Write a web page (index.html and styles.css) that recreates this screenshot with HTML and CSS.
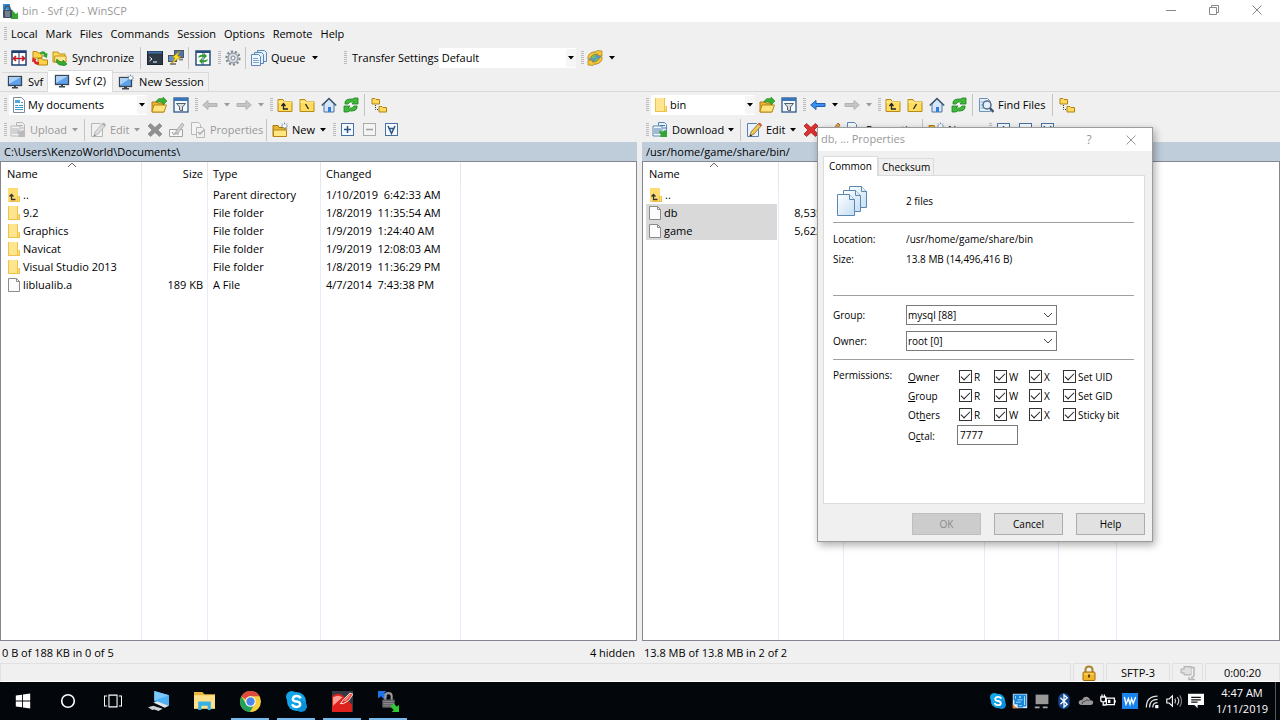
FILE: index.html
```html
<!DOCTYPE html>
<html lang="en">
<head>
<meta charset="utf-8">
<title>bin - Svf (2) - WinSCP</title>
<link rel="stylesheet" href="styles.css">
</head>
<body>
<svg class="defs" aria-hidden="true">
  <symbol id="app" viewBox="0 0 16 16"><path d="M1 1h7v3H7l4 4-2 2-5-4-3 2z" fill="#2b8de0"/><path d="M16 16H9v-3l1-1-3-3 3-2 4 4 2-2z" fill="#35a535"/><path d="M3 8V6q0-3 2.500-3T8 6v2" fill="none" stroke="#4b5560" stroke-width="1.500"/><rect x="1" y="7" width="9" height="8" rx="1" fill="#3f4c5a"/><path d="M3 9h5M3 11h5M3 13h5" stroke="#aab4bf"/></symbol>
  <symbol id="compare" viewBox="0 0 16 16"><rect x="1" y="1" width="14" height="14" fill="#fff" stroke="#1e3f70" stroke-width="1.500"/><path d="M1 2h14" stroke="#1e3f70" stroke-width="2"/><path d="M8 2v13" stroke="#1e3f70"/><path d="M2 8.500h12M5 6 2.500 8.500 5 11M11 6l2.500 2.500L11 11" fill="none" stroke="#c4161c" stroke-width="1.600"/></symbol>
  <symbol id="syncdirs" viewBox="0 0 16 16"><path d="M1 1.500h4l1 1.500h4v5H1zM6 8.500h4l1 1.500h4.500v5H6z" fill="#ffd34d" stroke="#b8860b"/><path d="M8 2.500q4-3 6 1l1.500-.5-.5 5-4.500-2 1.500-1q-1-2-4-.500z" fill="#31a531"/><path d="M7 14.500q-4 1-5.500-3L0 12l.5-4.500 4 2L3.500 10.500q1 2 3.500 1.500z" fill="#d22"/></symbol>
  <symbol id="sync" viewBox="0 0 16 16"><path d="M1 2h5l1 2h6v8H1z" fill="#ffd95c" stroke="#c1900f"/><path d="M3 6h11v6H2z" fill="#ffe88c" stroke="#c1900f"/><path d="M5 9q3 4 6 3v-2l4 4-4 3v-2q-5 1-7-4z" fill="#35ab32" stroke="#16761a" stroke-width=".6"/></symbol>
  <symbol id="term" viewBox="0 0 16 16"><rect x=".5" y="1.500" width="15" height="13" fill="#2d3a46" stroke="#1b2731"/><path d="M1 2.500h14" stroke="#3f6ea6" stroke-width="2"/><path d="m2.500 7 2.500 2-2.500 2M6 12h4" fill="none" stroke="#fff"/></symbol>
  <symbol id="putty" viewBox="0 0 16 16"><rect x="6.500" y=".5" width="9" height="7" fill="#4876b5" stroke="#555"/><rect x=".5" y="5.500" width="8" height="6" fill="#5d8fd0" stroke="#555"/><path d="M2 14h6M11 9.500h4" stroke="#888" stroke-width="2"/><path d="m12 1-8 6.500 3 .5-4 6 10-7.500-3.500-.5z" fill="#ffdf2e" stroke="#a98200" stroke-width=".7"/></symbol>
  <symbol id="refreshwin" viewBox="0 0 16 16"><rect x="1" y="1" width="14" height="14" fill="#fff" stroke="#27507d" stroke-width="1.500"/><path d="M1 2h14" stroke="#27507d" stroke-width="2"/><path d="M8 3v12" stroke="#27507d"/><path d="M3 8q1-4 6-3V3l3 3-3 3V7Q6 6 3 8zm10 1q-1 4-6 3v2l-3-3 3-3v2q3 1 6-1z" fill="#2ba12b"/></symbol>
  <symbol id="gear" viewBox="0 0 16 16"><circle cx="8" cy="8" r="6.600" fill="none" stroke="#7e8893" stroke-width="2" stroke-dasharray="2.300 1.800"/><circle cx="8" cy="8" r="5" fill="#d8dde2" stroke="#7e8893"/><circle cx="8" cy="8" r="2" fill="#f5f5f5" stroke="#7e8893"/></symbol>
  <symbol id="queue" viewBox="0 0 16 16"><path d="M6.500.5h7l2 2v9h-9z" fill="#e3effb" stroke="#5d87b3"/><path d="M3.500 2.500h7l2 2v9h-9z" fill="#e3effb" stroke="#5d87b3"/><path d="M.5 4.500h7l2 2v9h-9z" fill="#eef6ff" stroke="#5d87b3"/><path d="M2 8.500h5M2 10.500h6M2 12.500h6" stroke="#7ea6cf"/></symbol>
  <symbol id="globe" viewBox="0 0 16 16"><circle cx="8" cy="8" r="6.500" fill="#4b9ade"/><path d="m5 4 4 1-1 3-3 1zm4 4 3 1-2 4-2-2z" fill="#78bd55"/><path d="M.8 9Q.5 2 9 1.800L10 .5l5 .5v5l-5-.5 1-1.500Q4.500 3.500 3.200 9zM15.200 7q.3 7-8.200 7.200l-1 1.300-5-.5v-5l5 .5-1 1.500q6.500.5 7.800-5z" fill="#f5c63c" stroke="#a97c14" stroke-width=".7"/></symbol>
  <symbol id="monitor" viewBox="0 0 16 16"><rect x="1.500" y="2.500" width="13" height="9" fill="#5da2ea" stroke="#3d4650" stroke-width="1.300"/><path d="M2 3h12L2 10z" fill="#a8d0f8"/><path d="M7 12h2v1h2v1.500H5V13h2z" fill="#3d4650"/></symbol>
  <symbol id="monitornew" viewBox="0 0 16 16"><rect x="1.500" y="3.500" width="12" height="9" fill="#5da2ea" stroke="#3d4650" stroke-width="1.300"/><path d="M2 4h11L2 11z" fill="#a8d0f8"/><path d="M6 13h3v1h2v1.500H4V14h2z" fill="#3d4650"/><path d="M12.500.5v7M9 4h7M10 1.500l5 5M15 1.500l-5 5" stroke="#557da8" stroke-width=".8"/><circle cx="12.500" cy="4" r="1.800" fill="#fff"/></symbol>
  <symbol id="docs" viewBox="0 0 16 16"><path d="M2.500.5h8l3 3v12h-11z" fill="#fff" stroke="#7d8b99"/><path d="M4 3h5v3H4z" fill="#4aa6dd"/><path d="M4 8.500h3M8 8.500h4M4 10.500h8M4 12.500h8M10 5.500h2" stroke="#389ace"/></symbol>
  <symbol id="folder" viewBox="0 0 16 16"><path d="M2 1h10v8h2v6H2z" fill="#ffdc73"/><path d="M2 1h9v13H2z" fill="#ffe58f"/><path d="M11.500 9v6M2.500 1v14M3 14.500h10M13.500 9v6M11.500 1v8" stroke="#efc34a" fill="none"/></symbol>
  <symbol id="open" viewBox="0 0 16 16"><path d="M1 5h5l1 1h6v9H1z" fill="#e8b530" stroke="#b07d10"/><path d="M3 8h12.500l-2.500 7H1z" fill="#ffe37e" stroke="#b98814"/><path d="M5 5q2-5 7-3V0l4 4-4 4V6Q9 4 5 5z" fill="#39b030" stroke="#197d1b" stroke-width=".6"/></symbol>
  <symbol id="filter" viewBox="0 0 16 16"><rect x="1" y="1" width="14" height="14" fill="#f5faff" stroke="#2d5689" stroke-width="1.300"/><path d="M1 2.500h14" stroke="#3a74b9" stroke-width="3"/><path d="M3.500 6.500h9L9.500 10v4l-3-1v-3z" fill="#d5dde5" stroke="#505d6b"/></symbol>
  <symbol id="back" viewBox="0 0 16 16"><path d="M.7 8 6 3.500v3h9v3H6v3z" fill="#3b8ff0" stroke="#1d5fb4"/></symbol>
  <symbol id="fwd" viewBox="0 0 16 16"><path d="M15.300 8 10 3.500v3H1v3h9v3z" fill="#999" stroke="#777"/></symbol>
  <symbol id="backoff" viewBox="0 0 16 16"><path d="M.7 8 6 3.500v3h9v3H6v3z" fill="#999" stroke="#777"/></symbol>
  <symbol id="up" viewBox="0 0 16 16"><path d="M1 2.500h5l1 2h8v10H1z" fill="#ffdb5e" stroke="#b78b18"/><path d="M1 5h14" stroke="#fff0a8"/><path d="M6.500 6.500V12H11M4.500 9l2-2.500 2 2.500" fill="none" stroke="#222" stroke-width="1.300"/></symbol>
  <symbol id="rootwin" viewBox="0 0 16 16"><path d="M1 2.500h5l1 2h8v10H1z" fill="#ffdb5e" stroke="#b78b18"/><path d="M1 5h14" stroke="#fff0a8"/><path d="m6.500 7 3 5" stroke="#222" stroke-width="1.300"/></symbol>
  <symbol id="rootnix" viewBox="0 0 16 16"><path d="M1 2.500h5l1 2h8v10H1z" fill="#ffdb5e" stroke="#b78b18"/><path d="M1 5h14" stroke="#fff0a8"/><path d="m9.500 7-3 5" stroke="#222" stroke-width="1.300"/></symbol>
  <symbol id="home" viewBox="0 0 16 16"><path d="M3 7v8h10V7L8 2z" fill="#d6e6f8" stroke="#51739a"/><path d="M.8 8.500 8 1.500l7.200 7" fill="none" stroke="#3d556f" stroke-width="1.600"/><path d="M7 10h3v5H7z" fill="#2f7cda"/></symbol>
  <symbol id="refresh" viewBox="0 0 16 16"><path d="M2 7V5q1-3 5-3h3l1-1h4v6H9l2-2q-5-1-6 2zM14 9v2q-1 3-5 3H6l-1 1H1V9h6l-2 2q5 1 6-2z" fill="#42b83a" stroke="#1b8420" stroke-width=".8"/></symbol>
  <symbol id="tree" viewBox="0 0 16 16"><path d="M1 1.500h3l1 1h3.500v4.500H1zM8 9.500h3l1 1h3.500V15H8z" fill="#ffd95c" stroke="#b18416"/><path d="M4.500 8v4.500H8" fill="none" stroke="#333" stroke-dasharray="1 1"/></symbol>
  <symbol id="transfer" viewBox="0 0 16 16"><path d="M6.500.5h6l2 2v10h-8z" fill="#e3effb" stroke="#5d87b3"/><path d="M1 4h9v10H1z" fill="#f3f8fd" stroke="#5d87b3"/><path d="M2 7h7M2 9h7M2 11h5M8 3.500h5M11 6h3" stroke="#4a7dac"/><path d="m8 8 2 2 3-2 2 1v6H8l1-2-2-2z" fill="#34a534"/></symbol>
  <symbol id="edit" viewBox="0 0 16 16"><path d="M1.500 1.500h9l2 2v11h-11z" fill="#eaf3fc" stroke="#5a83ac"/><path d="m13 1 2.500 2.500L8 12l-4 2 1-4z" fill="#f5c852" stroke="#77694a" stroke-width=".8"/><path d="m12 2 2.500 2.500L16 3l-2-2.500z" fill="#d65b4c"/><path d="m4 14 1.500-1" stroke="#222" stroke-width="1.500"/></symbol>
  <symbol id="del" viewBox="0 0 16 16"><path d="m3.500 1.500 4.500 4 4.500-4 2.500 2.500L11 8l4 4-2.500 2.500-4.500-4-4.500 4L1 12l4-4-4-4z" fill="#e03030" stroke="#8f1212" stroke-width=".7"/></symbol>
  <symbol id="deloff" viewBox="0 0 16 16"><path d="m3.500 1.500 4.500 4 4.500-4 2.500 2.500L11 8l4 4-2.500 2.500-4.500-4-4.500 4L1 12l4-4-4-4z" fill="#333" stroke="#222" stroke-width=".7"/></symbol>
  <symbol id="rename" viewBox="0 0 16 16"><path d="M.5 7.500h13v7H.5z" fill="#fff" stroke="#555"/><path d="m3 10 2 3M6 10v3M9 9v4" stroke="#444"/><path d="m13 1 2 2-6 8-2 1v-3z" fill="#f0a745" stroke="#845521" stroke-width=".8"/></symbol>
  <symbol id="props" viewBox="0 0 16 16"><path d="M1.500.5h7l2 2v10h-9z" fill="#f4f9fe" stroke="#5d87b3"/><path d="M6.500 5.500h6l2 2v8h-8z" fill="#eaf3fc" stroke="#5d87b3"/><path d="m8 10 2 2 4-4" stroke="#3d73aa" fill="none" stroke-width="1.500"/></symbol>
  <symbol id="newf" viewBox="0 0 16 16"><path d="M1 3.500h5l1 2h7v9H1z" fill="#e9b432" stroke="#a87808"/><path d="M1.500 8h13v6.500h-13z" fill="#ffe680" stroke="#b38615"/><path d="M12.500.5v7M9 4h7M10 1.500l5 5M15 1.500l-5 5" stroke="#557da8" stroke-width=".8"/><circle cx="12.500" cy="4" r="1.800" fill="#fff"/></symbol>
  <symbol id="plus" viewBox="0 0 16 16"><rect x="1.500" y="1.500" width="12" height="12" fill="#f5faff" stroke="#486f9e"/><path d="M7.500 4v7M4 7.500h7" stroke="#2c5486" stroke-width="1.500"/></symbol>
  <symbol id="minus" viewBox="0 0 16 16"><rect x="1.500" y="1.500" width="12" height="12" fill="#f5faff" stroke="#486f9e"/><path d="M4 7.500h7" stroke="#2c5486" stroke-width="1.500"/></symbol>
  <symbol id="invert" viewBox="0 0 16 16"><rect x="1.500" y="1.500" width="12" height="12" fill="#f5faff" stroke="#486f9e"/><path d="m4 4 3.500 7.500L11 4M5 6.500h5" fill="none" stroke="#2c5486" stroke-width="1.500"/></symbol>
  <symbol id="find" viewBox="0 0 16 16"><path d="M1.500 1.500h8l3 3v10h-11z" fill="#e3effb" stroke="#6d93bc"/><path d="M2.500 5h4M2.500 8h3M2.500 11h4" stroke="#82a9d1"/><circle cx="9" cy="8" r="4" fill="#dff0ff" stroke="#596b7d" stroke-width="1.500"/><path d="m12 11 3.500 4" stroke="#44546d" stroke-width="2.500"/></symbol>
  <symbol id="parent" viewBox="0 0 16 16"><path d="M2 1h10v8h2v6H2z" fill="#ffdc73"/><path d="M11.500 9v6M3 14.500h10M13.500 9v6" stroke="#efc34a"/><path d="M5.500 7.500v5h4M3.500 9.500l2-2 2 2" fill="none" stroke="#333" stroke-width="1.300"/></symbol>
  <symbol id="file" viewBox="0 0 16 16"><path d="M2.500 1.500h8l3 3v10h-11z" fill="#fcfcfc" stroke="#8c8c8c"/><path d="M10.500 1.500v3h3" fill="none" stroke="#8c8c8c"/></symbol>
  <symbol id="caret" viewBox="0 0 6 4"><path d="M0 0h6L3 3.500z" fill="currentColor"/></symbol>
  <symbol id="chev" viewBox="0 0 10 6"><path d="m1 1 4 4 4-4" fill="none" stroke="currentColor"/></symbol>
  <symbol id="close" viewBox="0 0 10 10"><path d="m.5.5 9 9m0-9-9 9" stroke="currentColor"/></symbol>
  <symbol id="skype" viewBox="0 0 20 20"><circle cx="10" cy="10" r="9" fill="#12a5e8"/><circle cx="5.500" cy="5.500" r="5.500" fill="#12a5e8"/><circle cx="14.500" cy="14.500" r="5.500" fill="#0b8fd8"/><path d="M14 7q-1-2.200-4-2.200T6.500 7.500Q6.500 9.500 10 10t3.500 2.700q0 2.500-3.500 2.500T6 12.700" fill="none" stroke="#fff" stroke-width="2.300"/></symbol>
</svg>

<div class="window">
  <header class="titlebar">
    <svg class="i"><use href="#app"/></svg>
    <h1>bin - Svf (2) - WinSCP</h1>
    <div class="winbtns">
      <button aria-label="Minimize"><svg viewBox="0 0 10 10"><path d="M0 5.500h10" stroke="currentColor"/></svg></button>
      <button aria-label="Restore"><svg viewBox="0 0 10 10"><path d="M.5 2.500h7v7h-7zM2.500 2.500v-2h7v7h-2" fill="none" stroke="currentColor"/></svg></button>
      <button aria-label="Close"><svg><use href="#close"/></svg></button>
    </div>
  </header>

  <nav class="menubar"><i class="grip"></i>
    <button>Local</button><button>Mark</button><button>Files</button><button>Commands</button><button>Session</button><button>Options</button><button>Remote</button><button>Help</button>
  </nav>

  <div class="bar main-bar">
    <i class="grip"></i>
    <button class="tb" aria-label="Compare"><svg class="i"><use href="#compare"/></svg></button>
    <button class="tb" aria-label="Synchronize browsing"><svg class="i"><use href="#syncdirs"/></svg></button>
    <button class="tb text synchronize"><svg class="i"><use href="#sync"/></svg>Synchronize</button>
    <i class="sep"></i>
    <button class="tb" aria-label="Terminal"><svg class="i"><use href="#term"/></svg></button>
    <button class="tb" aria-label="PuTTY"><svg class="i"><use href="#putty"/></svg></button>
    <i class="sep"></i>
    <button class="tb" aria-label="Keep up to date"><svg class="i"><use href="#refreshwin"/></svg></button>
    <i class="grip"></i>
    <button class="tb" aria-label="Preferences"><svg class="i"><use href="#gear"/></svg></button>
    <i class="sep"></i>
    <button class="tb text queue"><svg class="i"><use href="#queue"/></svg>Queue<svg class="caret"><use href="#caret"/></svg></button>
    <i class="grip transfer-grip"></i>
    <label for="preset">Transfer Settings</label>
    <div class="combo preset"><select id="preset"><option>Default</option></select><svg class="caret"><use href="#caret"/></svg></div>
    <i class="grip"></i>
    <button class="tb" aria-label="Session sync"><svg class="i"><use href="#globe"/></svg></button>
    <button class="drop" aria-label="Session sync options"><svg class="caret"><use href="#caret"/></svg></button>
  </div>

  <div class="tabs" role="tablist">
    <button role="tab"><svg class="i"><use href="#monitor"/></svg>Svf</button>
    <button role="tab" class="active" aria-selected="true"><svg class="i"><use href="#monitor"/></svg>Svf (2)</button>
    <button role="tab"><svg class="i"><use href="#monitornew"/></svg>New Session</button>
  </div>

  <main class="panels">
    <section class="panel">
      <div class="bar">
        <i class="grip"></i>
        <div class="combo drive"><svg class="i"><use href="#docs"/></svg><select aria-label="Local directory"><option>My documents</option></select><svg class="caret"><use href="#caret"/></svg></div>
        <button class="tb" aria-label="Open directory"><svg class="i"><use href="#open"/></svg></button>
        <button class="tb" aria-label="Filter"><svg class="i"><use href="#filter"/></svg></button>
        <i class="grip"></i>
        <button class="tb" aria-label="Back" disabled><svg class="i"><use href="#backoff"/></svg></button>
        <button class="drop" aria-label="Back history" disabled><svg class="caret"><use href="#caret"/></svg></button>
        <button class="tb" aria-label="Forward" disabled><svg class="i"><use href="#fwd"/></svg></button>
        <button class="drop" aria-label="Forward history" disabled><svg class="caret"><use href="#caret"/></svg></button>
        <i class="grip"></i>
        <button class="tb" aria-label="Parent directory"><svg class="i"><use href="#up"/></svg></button>
        <button class="tb" aria-label="Root directory"><svg class="i"><use href="#rootwin"/></svg></button>
        <button class="tb" aria-label="Home"><svg class="i"><use href="#home"/></svg></button>
        <button class="tb" aria-label="Refresh"><svg class="i"><use href="#refresh"/></svg></button>
        <i class="sep"></i>
        <button class="tb" aria-label="Tree"><svg class="i"><use href="#tree"/></svg></button>
      </div>
      <div class="bar">
        <i class="grip"></i>
        <button class="tb text upload" disabled><svg class="i"><use href="#transfer"/></svg>Upload<svg class="caret"><use href="#caret"/></svg></button>
        <i class="sep"></i>
        <button class="tb text edit" disabled><svg class="i"><use href="#edit"/></svg>Edit<svg class="caret"><use href="#caret"/></svg></button>
        <button class="tb" aria-label="Delete" disabled><svg class="i"><use href="#deloff"/></svg></button>
        <button class="tb" aria-label="Rename" disabled><svg class="i"><use href="#rename"/></svg></button>
        <button class="tb text properties" disabled><svg class="i"><use href="#props"/></svg>Properties</button>
        <i class="sep"></i>
        <button class="tb text new"><svg class="i"><use href="#newf"/></svg>New<svg class="caret"><use href="#caret"/></svg></button>
        <i class="grip"></i>
        <button class="tb" aria-label="Select"><svg class="i"><use href="#plus"/></svg></button>
        <button class="tb" aria-label="Unselect" disabled><svg class="i"><use href="#minus"/></svg></button>
        <button class="tb" aria-label="Select all"><svg class="i"><use href="#invert"/></svg></button>
      </div>
      <div class="path">C:\Users\KenzoWorld\Documents\</div>
      <div class="list">
        <table>
          <colgroup><col class="c-name"><col class="c-size"><col class="c-type"><col class="c-changed"><col></colgroup>
          <thead><tr><th class="sorted">Name<svg class="sort" viewBox="0 0 10 6"><path d="m1 5 4-4 4 4" fill="none" stroke="currentColor"/></svg></th><th class="num">Size</th><th>Type</th><th>Changed</th><th></th></tr></thead>
          <tbody>
            <tr><td><span><svg class="i"><use href="#parent"/></svg>..</span></td><td></td><td>Parent directory</td><td>1/10/2019&nbsp; 6:42:33 AM</td><td></td></tr>
            <tr><td><span><svg class="i"><use href="#folder"/></svg>9.2</span></td><td></td><td>File folder</td><td>1/8/2019&nbsp; 11:35:54 AM</td><td></td></tr>
            <tr><td><span><svg class="i"><use href="#folder"/></svg>Graphics</span></td><td></td><td>File folder</td><td>1/9/2019&nbsp; 1:24:40 AM</td><td></td></tr>
            <tr><td><span><svg class="i"><use href="#folder"/></svg>Navicat</span></td><td></td><td>File folder</td><td>1/9/2019&nbsp; 12:08:03 AM</td><td></td></tr>
            <tr><td><span><svg class="i"><use href="#folder"/></svg>Visual Studio 2013</span></td><td></td><td>File folder</td><td>1/8/2019&nbsp; 11:36:29 PM</td><td></td></tr>
            <tr><td><span><svg class="i"><use href="#file"/></svg>liblualib.a</span></td><td class="num">189 KB</td><td>A File</td><td>4/7/2014&nbsp; 7:43:38 PM</td><td></td></tr>
            <tr class="fill"><td></td><td></td><td></td><td></td><td></td></tr>
          </tbody>
        </table>
      </div>
      <div class="summary"><span>0 B of 188 KB in 0 of 5</span><span>4 hidden</span></div>
    </section>

    <section class="panel">
      <div class="bar">
        <i class="grip"></i>
        <div class="combo remote"><svg class="i"><use href="#folder"/></svg><select aria-label="Remote directory"><option>bin</option></select><svg class="caret"><use href="#caret"/></svg></div>
        <button class="tb" aria-label="Open directory"><svg class="i"><use href="#open"/></svg></button>
        <button class="tb" aria-label="Filter"><svg class="i"><use href="#filter"/></svg></button>
        <i class="grip"></i>
        <button class="tb" aria-label="Back"><svg class="i"><use href="#back"/></svg></button>
        <button class="drop" aria-label="Back history"><svg class="caret"><use href="#caret"/></svg></button>
        <button class="tb" aria-label="Forward" disabled><svg class="i"><use href="#fwd"/></svg></button>
        <button class="drop" aria-label="Forward history" disabled><svg class="caret"><use href="#caret"/></svg></button>
        <i class="grip"></i>
        <button class="tb" aria-label="Parent directory"><svg class="i"><use href="#up"/></svg></button>
        <button class="tb" aria-label="Root directory"><svg class="i"><use href="#rootnix"/></svg></button>
        <button class="tb" aria-label="Home"><svg class="i"><use href="#home"/></svg></button>
        <button class="tb" aria-label="Refresh"><svg class="i"><use href="#refresh"/></svg></button>
        <i class="sep"></i>
        <button class="tb text findfiles"><svg class="i"><use href="#find"/></svg>Find Files</button>
        <i class="sep"></i>
        <button class="tb" aria-label="Tree"><svg class="i"><use href="#tree"/></svg></button>
      </div>
      <div class="bar">
        <i class="grip"></i>
        <button class="tb text download"><svg class="i"><use href="#transfer"/></svg>Download<svg class="caret"><use href="#caret"/></svg></button>
        <i class="sep"></i>
        <button class="tb text edit"><svg class="i"><use href="#edit"/></svg>Edit<svg class="caret"><use href="#caret"/></svg></button>
        <button class="tb" aria-label="Delete"><svg class="i"><use href="#del"/></svg></button>
        <button class="tb" aria-label="Rename"><svg class="i"><use href="#rename"/></svg></button>
        <button class="tb text properties"><svg class="i"><use href="#props"/></svg>Properties</button>
        <i class="sep"></i>
        <button class="tb text new"><svg class="i"><use href="#newf"/></svg>New<svg class="caret"><use href="#caret"/></svg></button>
        <i class="grip"></i>
        <button class="tb" aria-label="Select"><svg class="i"><use href="#plus"/></svg></button>
        <button class="tb" aria-label="Unselect"><svg class="i"><use href="#minus"/></svg></button>
        <button class="tb" aria-label="Select all"><svg class="i"><use href="#invert"/></svg></button>
      </div>
      <div class="path">/usr/home/game/share/bin/</div>
      <div class="list">
        <table>
          <colgroup><col class="r-name"><col class="r-size"><col class="r-changed"><col class="r-rights"><col class="r-owner"><col></colgroup>
          <thead><tr><th class="sorted">Name<svg class="sort" viewBox="0 0 10 6"><path d="m1 5 4-4 4 4" fill="none" stroke="currentColor"/></svg></th><th></th><th></th><th></th><th></th><th></th></tr></thead>
          <tbody>
            <tr><td><span><svg class="i"><use href="#parent"/></svg>..</span></td><td></td><td></td><td></td><td></td><td></td></tr>
            <tr class="selected"><td><span><svg class="i"><use href="#file"/></svg>db</span></td><td class="num">8,535 KB</td><td></td><td></td><td></td><td></td></tr>
            <tr class="selected"><td><span><svg class="i"><use href="#file"/></svg>game</span></td><td class="num">5,622 KB</td><td></td><td></td><td></td><td></td></tr>
            <tr class="fill"><td></td><td></td><td></td><td></td><td></td><td></td></tr>
          </tbody>
        </table>
      </div>
      <div class="summary"><span>13.8 MB of 13.8 MB in 2 of 2</span></div>
    </section>
  </main>

  <footer class="statusbar">
    <span class="grow"></span>
    <span class="st-icon"><svg class="i" viewBox="0 0 16 16"><path d="M4.500 8V5q0-3.500 3.500-3.500T11.500 5v3" fill="none" stroke="#a9842b" stroke-width="2"/><rect x="2" y="7" width="12" height="8.500" rx="1" fill="#f0b429" stroke="#a06a0a"/><path d="M3 9h10" stroke="#ffdf82"/><path d="M8 9.500v3" stroke="#63420a" stroke-width="2"/></svg></span>
    <span class="st-proto">SFTP-3</span>
    <span class="st-icon"><svg class="i" viewBox="0 0 16 16"><path d="M1 4h3V1.500h7V10H4V8H1z" fill="#d2d2d2" stroke="#b2b2b2"/><path d="M2 6h9M5 4h6M5 8h6" stroke="#efefef"/><path d="M11 2.500h3V10q0 2-2 2v2M9 14.500h6M9 12v3" fill="none" stroke="#b5b5b5" stroke-width="1.500"/></svg></span>
    <span class="st-time">0:00:20</span>
  </footer>

  <div class="taskbar">
    <button class="task" aria-label="Start"><svg viewBox="0 0 20 20"><path d="m2 4 7-1v6.500H2zM10 2.800l8-1.100v7.800h-8zM2 10.500h7V17l-7-1zM10 10.500h8v7.800l-8-1.100z" fill="#fff"/></svg></button>
    <button class="task" aria-label="Cortana"><svg viewBox="0 0 20 20"><circle cx="10" cy="10" r="7" fill="none" stroke="#fff" stroke-width="1.800"/></svg></button>
    <button class="task" aria-label="Task view"><svg viewBox="0 0 20 20"><path d="M5.500 3.500h9v13h-9zM3.500 4.500h-3v11h3M16.500 4.500h3v11h-3" fill="none" stroke="#fff" stroke-width="1.200"/></svg></button>
    <button class="task app" aria-label="This PC"><svg viewBox="0 0 20 20"><path d="m6 0 14 4v10L6 10z" fill="#4fb0f2"/><path d="m6 0 14 4-14 5z" fill="#7cc8fa"/><path d="m5 11 4-1 11 4-4 2z" fill="#e1e4e8"/><path d="m0 15.500 5-1.500 9 3-4 2-4-1.500-2 .5z" fill="#cbd1d7"/></svg></button>
    <button class="task app" aria-label="File Explorer"><svg viewBox="0 0 20 20"><path d="M0 1h8l2 2h10v5H0z" fill="#e9b63d"/><path d="M0 4h20v13H0z" fill="#ffe08a"/><path d="M4 10h12v8h-3v-4H7v4H4z" fill="#33b2e8"/></svg></button>
    <button class="task app running" aria-label="Chrome"><svg viewBox="0 0 20 20"><circle cx="10" cy="10" r="10" fill="#fbce3c"/><path d="M1.300 5A10 10 0 0 1 18.700 5H10a5 5 0 0 0-4.500 3z" fill="#dd4b3e"/><path d="M1.300 5A10 10 0 0 0 9.500 20l4-7a5 5 0 0 1-8-1z" fill="#22a15d"/><circle cx="10" cy="10" r="5" fill="#fff"/><circle cx="10" cy="10" r="4" fill="#4b88ee"/></svg></button>
    <button class="task app running" aria-label="Skype"><svg viewBox="0 0 20 20"><use href="#skype"/></svg></button>
    <button class="task app running" aria-label="Game client"><svg viewBox="0 0 20 20"><path d="M0 0h20v20H0z" fill="#343946"/><path d="M0 5q5-4 10-1l5 5 4 4v7H0z" fill="#de211c"/><path d="M1 6q5-3 9 0l-9 8z" fill="#f9a096"/><path d="m8 12 3-4 6-6 3 1-4 6-5 3z" fill="#e8362c" stroke="#fff" stroke-width=".8"/><path d="m11 9 6-6 1 .5-5 6z" fill="#ff9d8f"/></svg></button>
    <button class="task app running" aria-label="WinSCP"><svg viewBox="0 0 20 20"><path d="M0 0h8L6 2l3 3-3 3-3-3-3 2z" fill="#1f73e8"/><path d="M7 9V5q0-3 3-3t3 3v4" fill="none" stroke="#999" stroke-width="2"/><rect x="4" y="8" width="12" height="8" rx="1" fill="#5a5e62"/><path d="M5 10h10M5 12h10M5 14h10" stroke="#888"/><path d="M20 20h-7l2-2-3-3 3-3 3 3 2-2z" fill="#2fca31"/></svg></button>
    <div class="tray">
      <svg viewBox="0 0 20 20"><use href="#skype"/></svg>
      <svg viewBox="0 0 20 20"><path d="M1 1h18v18H1z" fill="#dceffc"/><path d="M3 3h3v5H3zM8 3h4v4H8zM14 3h3v13h-3zM4 10h8v3H4zM8 14h5v3H8z" fill="none" stroke="#1686d9" stroke-width="2"/><path d="M1 12q1 6 7 7H1z" fill="#f07d1c"/></svg>
      <svg viewBox="0 0 20 20"><path d="M2 2h16v12H2z" fill="#999"/><path d="M1 18h6M11 18h6" stroke="#aaa" stroke-width="2"/></svg>
      <svg viewBox="0 0 20 20"><rect x="3" width="14" height="20" rx="7" fill="#124a92"/><path d="m5.500 6 8.500 8-4 3.500v-15L14 6l-8.500 8" fill="none" stroke="#fff" stroke-width="1.600"/></svg>
      <svg viewBox="0 0 20 20"><path d="M4 15q-4-1-3-4t4-2q2-5 7-4 3 1 3 4 4 0 4 3t-3 3z" fill="#999"/><path d="M5 14q0-4 4-4 2-3 5 0" fill="none" stroke="#333"/></svg>
      <svg viewBox="0 0 20 20"><path d="M8 6.500h10v8H8zM19 9v3M1 5v4q0 2 3 2t3-2V5zM2.500 2v3M5.500 2v3M4 11v4h4" fill="none" stroke="#fff" stroke-width="1.600"/><path d="M10 8.500h3v4h-3z" fill="#fff"/></svg>
      <svg viewBox="0 0 20 20"><path d="M0 0h20v20H0z" fill="#1883ee"/><path d="m3 5 2 9 3-7 2 7 2-7 2 6 3-8" fill="none" stroke="#fff" stroke-width="1.700"/></svg>
      <svg viewBox="0 0 20 20"><g fill="none" stroke="#ddd" stroke-width="1.600"><path d="M3 18Q3 4 17 4M7 18Q7 8 17 8M11 18q0-6 6-6"/></g><path d="M14 15h4v4h-4z" fill="#fff"/></svg>
      <svg viewBox="0 0 20 20"><path d="M1 7.500h3l4-4v13l-4-4H1z" fill="none" stroke="#fff" stroke-width="1.400"/><path d="M11 7q2 3 0 6M14 5q4 5 0 10" fill="none" stroke="#ccc" stroke-width="1.500"/><path d="M17 3q5 7 0 14" fill="none" stroke="#777" stroke-width="1.500"/></svg>
      <svg viewBox="0 0 20 20"><path d="M0 1h20v14h-8v4l-4-4H0z" fill="#fff"/><path d="M4 5.500h12M4 8.500h12M4 11.500h8" stroke="#111" stroke-width="1.500"/></svg>
      <time class="clock">4:47 AM<br>1/11/2019</time>
      <i class="desktop"></i>
    </div>
  </div>

  <form class="dialog" role="dialog" aria-labelledby="dlg-title">
    <div class="dlg-head">
      <h2 id="dlg-title">db, ... Properties</h2>
      <button type="button" aria-label="Context help">?</button>
      <button type="button" aria-label="Close"><svg><use href="#close"/></svg></button>
    </div>
    <div class="dlg-tabs" role="tablist">
      <button type="button" role="tab" class="active" aria-selected="true">Common</button>
      <button type="button" role="tab">Checksum</button>
    </div>
    <div class="page">
      <div class="group head">
        <svg class="files" viewBox="0 0 32 32"><defs><linearGradient id="sheet" x1="0" y1="0" x2="1" y2="1"><stop offset="0" stop-color="#fff"/><stop offset="1" stop-color="#c5def3"/></linearGradient></defs><g fill="url(#sheet)" stroke="#5a88b5"><path d="M12.500 1.500h12l5 5v16h-17z"/><path d="M24.500 1.500v5h5"/><path d="M6.500 5.500h12l5 5v16h-17z"/><path d="M18.500 5.500v5h5"/><path d="M.5 9.500h12l5 5v16H.5z"/><path d="M12.500 9.500v5h5"/></g></svg>
        <span>2 files</span>
      </div>
      <div class="group info"><span>Location:</span><span>/usr/home/game/share/bin</span><span>Size:</span><span>13.8 MB (14,496,416 B)</span></div>
      <div class="group owners">
        <label for="grp">Group:</label><div class="pick"><select id="grp"><option>mysql [88]</option></select><svg><use href="#chev"/></svg></div>
        <label for="own">Owner:</label><div class="pick"><select id="own"><option>root [0]</option></select><svg><use href="#chev"/></svg></div>
      </div>
      <div class="group rights">
        <span>Permissions:</span>
        <div class="perm">
          <span><u>O</u>wner</span><label><input type="checkbox" checked>R</label><label><input type="checkbox" checked>W</label><label><input type="checkbox" checked>X</label><label><input type="checkbox" checked>Set UID</label>
          <span><u>G</u>roup</span><label><input type="checkbox" checked>R</label><label><input type="checkbox" checked>W</label><label><input type="checkbox" checked>X</label><label><input type="checkbox" checked>Set GID</label>
          <span>Ot<u>h</u>ers</span><label><input type="checkbox" checked>R</label><label><input type="checkbox" checked>W</label><label><input type="checkbox" checked>X</label><label><input type="checkbox" checked>Sticky bit</label>
          <label class="octal" for="octal">O<u>c</u>tal:</label><input id="octal" type="text" value="7777">
        </div>
      </div>
    </div>
    <div class="actions"><button type="button" disabled>OK</button><button type="button">Cancel</button><button type="button">Help</button></div>
  </form>
</div>
</body>
</html>
```
FILE: styles.css
```css
* { box-sizing: border-box; }
body { margin: 0; font: 11px/16px "Open Sans", "Noto Sans", sans-serif; color: #000; }
button, input, select { font: inherit; color: inherit; }
button { border: 0; background: none; padding: 0; display: flex; align-items: center; justify-content: center; white-space: nowrap; }
select { appearance: none; border: 0; background: none; padding: 0; outline: 0; }
svg { display: block; flex: none; }
.defs { position: absolute; width: 0; height: 0; }
.i { width: 16px; height: 16px; }
.caret { width: 6px; height: 4px; }

.window { position: relative; display: flex; flex-direction: column; min-height: 100vh; background: #f0f0f0; }

.titlebar { display: flex; align-items: center; height: 22px; padding-left: 2px; background: #fff; color: #999; }
.titlebar h1 { flex: 1; margin: 0 4px; font-size: 11px; font-weight: 400; }
.winbtns { display: flex; padding-right: 2px; }
.winbtns button { width: 43px; height: 22px; padding-bottom: 2px; color: #888; }
.winbtns svg { width: 10px; height: 10px; }

.grip { width: 5px; height: 14px; padding: 0 1px; background: repeating-linear-gradient(#bbb 0 1px, #f0f0f0 1px 2px) content-box; }
.sep { width: 6px; height: 22px; padding: 0 2px; background: #c4c4c4 content-box; border-right: 1px solid transparent; }

.menubar { display: flex; align-items: center; height: 23px; padding-left: 3px; }
.menubar button { padding: 0 4px 0 3px; }
.menubar button + button { padding-left: 4px; }

.bar { --tool: 22px; display: flex; align-items: center; height: 25px; padding-left: 3px; }
.main-bar { --tool: 21px; }
.tb { width: var(--tool); height: 22px; }
.tb.text { justify-content: flex-start; gap: 4px; padding: 0 3px 0 2px; }
.tb .caret { margin-left: auto; margin-right: 1px; }
.drop { width: 12px; height: 22px; }
.bar .grip:not(:first-child) { margin-left: 2px; }
.main-bar .grip:not(:first-child) { margin-left: 4px; }
button:disabled { color: #999; }
button:disabled .i { filter: grayscale(1); opacity: 0.5; }
.tb.synchronize { width: 88px; }
.tb.queue { width: 73px; }
.tb.upload { width: 74px; }
.tb.download { width: 88px; }
.tb.edit { width: 56px; }
.tb.properties { width: 76px; }
.tb.new { width: 60px; }
.tb.findfiles { width: 74px; }
.main-bar .transfer-grip:not(:first-child) { margin: 0 4px 0 21px; }

.combo { display: flex; align-items: center; height: 20px; margin: 0 1px; padding-left: 2px; background: #fff; }
.combo select { flex: 1; height: 20px; min-width: 0; padding-left: 1px; }
.combo .caret { box-sizing: content-box; padding: 7px 2px; background: #f6f6f6; }
.preset { width: 137px; margin: 0; }
.drive { width: 138px; }
.remote { width: 104px; }

.tabs { display: flex; align-items: flex-end; height: 22px; padding-left: 2px; border-bottom: 1px solid #d9d9d9; }
.tabs button { height: 19px; gap: 5px; padding: 0 4px 0 5px; border: 1px solid #d9d9d9; border-width: 1px 1px 0 0; }
.tabs .active { height: 22px; margin-bottom: -1px; padding: 0 6px 2px; background: #fff; }

.panels { flex: 1; display: grid; grid-template-columns: 637fr 638fr; gap: 5px; }
.panel { display: flex; flex-direction: column; min-width: 0; }
.path { height: 19px; padding: 2px 4px 1px; background: #bfcddb; }
.list { flex: 1; display: flex; border: 1px solid #828790; background: #fff; }
table { width: 100%; table-layout: fixed; border-collapse: separate; border-spacing: 0; }
th, td { height: 18px; padding: 0 5px; text-align: left; font-weight: 400; white-space: nowrap; border-right: 1px solid #e4eefa; }
td:last-child, th:last-child { border-right: 0; }
th { position: relative; height: 24px; border-color: #e5e5e5; }
th:first-child { padding-left: 6px; }
td:first-child { padding: 0 1px 0 3px; }
td span { display: flex; align-items: center; gap: 1px; padding-left: 2px; }
.num { text-align: right; padding-right: 4px; }
.sort { position: absolute; top: 0; left: 66px; width: 10px; height: 6px; color: #666; }
.fill td { height: auto; }
.selected td:first-child span { height: 18px; padding-left: 1px; background: #d9d9d9; }
.c-name { width: 141px; }
.c-size { width: 66px; }
.c-type { width: 113px; }
.c-changed { width: 140px; }
.r-name { width: 136px; }
.r-size { width: 65px; }
.r-changed { width: 141px; }
.r-rights { width: 74px; }
.r-owner { width: 58px; }
.summary { display: flex; justify-content: space-between; height: 22px; padding: 4px 2px 2px; }

.statusbar { display: flex; gap: 2px; height: 19px; border-bottom: 1px solid #fff; text-align: center; }
.statusbar span { display: flex; align-items: center; justify-content: center; border: 1px solid #e0e0e0; border-bottom: 0; }
.statusbar .grow { flex: 1; }
.st-icon { width: 31px; }
.st-proto { width: 64px; }
.st-time { width: 75px; }

.taskbar { display: flex; height: 38px; background: #03060b; }
.task { width: 45px; height: 38px; border-bottom: 2px solid transparent; padding-top: 2px; }
.task.app { width: 46px; }
.task svg { width: 18px; height: 18px; }
.task.app svg { width: 21px; height: 21px; }
.running { position: relative; }
.running::after { content: ""; position: absolute; inset: auto 4px -2px; height: 2px; background: #76b9ed; }
.tray { display: flex; align-items: center; margin-left: auto; gap: 7px; }
.tray svg { width: 16px; height: 16px; margin-right: -1px; }
.clock { width: 64px; color: #fff; text-align: center; }
.desktop { width: 5px; height: 38px; margin-left: -6px; border-left: 1px solid #555; }

.dialog { position: absolute; top: 127px; right: 127px; width: 336px; height: 415px; display: flex; flex-direction: column; border: 1px solid #9b9b9b; background: #f0f0f0; box-shadow: 2px 3px 8px #0005; font-size: 10px; }
.dlg-head { display: flex; height: 23px; background: #fff; color: #999; }
.dlg-head h2 { flex: 1; margin: 0; padding: 3px; font-size: 11px; font-weight: 400; }
.dlg-head button { width: 42px; font-size: 12px; }
.dlg-head svg { width: 10px; height: 10px; }
.dlg-tabs { display: flex; align-items: flex-end; height: 24px; padding-left: 5px; }
.dlg-tabs button { height: 17px; padding: 0 3px; border: 1px solid #dcdcdc; border-bottom: 0; }
.dlg-tabs .active { height: 20px; margin-bottom: -1px; padding: 0 5px 2px; z-index: 1; background: #fff; }
.page { flex: 1; margin: 0 7px 0 5px; padding: 0 10px 0 9px; border: 1px solid #dcdcdc; background: #fff; }
.group { display: grid; grid-template-columns: 73px 1fr; }
.group + .group { border-top: 1px solid #a0a0a0; }
.head { height: 46px; align-items: center; padding-top: 4px; }
.files { width: 32px; height: 32px; margin-left: 4px; }
.info { height: 73px; padding-top: 8px; align-content: start; row-gap: 4px; }
.owners { height: 64px; padding-top: 9px; align-content: start; row-gap: 6px; align-items: center; }
.pick { width: 151px; height: 20px; display: grid; align-items: center; border: 1px solid #7a7a7a; }
.pick > * { grid-area: 1 / 1; }
.pick select { width: 100%; height: 18px; padding: 0 0 1px 1px; }
.pick svg { width: 10px; height: 6px; margin-right: 3px; justify-self: end; color: #444; }
.rights { padding-top: 7px; }
.perm { display: grid; grid-template-columns: 51px 35px 35px 34px 1fr; grid-auto-rows: 19px; align-items: center; padding-left: 2px; }
.perm label { display: flex; align-items: center; gap: 2px; white-space: nowrap; }
.perm input[type="checkbox"] { appearance: none; width: 13px; height: 13px; margin: 0; border: 1px solid #333; background: #fff; display: grid; place-items: center; }
.perm input:checked::before { content: ""; width: 8px; height: 4px; margin-top: -3px; border: solid #222; border-width: 0 0 1px 1px; transform: rotate(-45deg); }
.perm u { text-underline-offset: 1px; }
.perm .octal { gap: 0; height: 24px; padding-top: 4px; }
.perm input[type="text"] { grid-column: 2 / span 2; width: 61px; height: 20px; margin: 3px 0 0 -2px; padding: 0 2px; border: 1px solid #7a7a7a; }
.actions { display: flex; justify-content: flex-end; gap: 13px; padding: 9px 7px 6px; }
.actions button { width: 69px; height: 22px; border: 1px solid #adadad; background: #e1e1e1; }
.actions button:disabled { color: #8a8a8a; background: #ccc; border-color: #bfbfbf; }
```
